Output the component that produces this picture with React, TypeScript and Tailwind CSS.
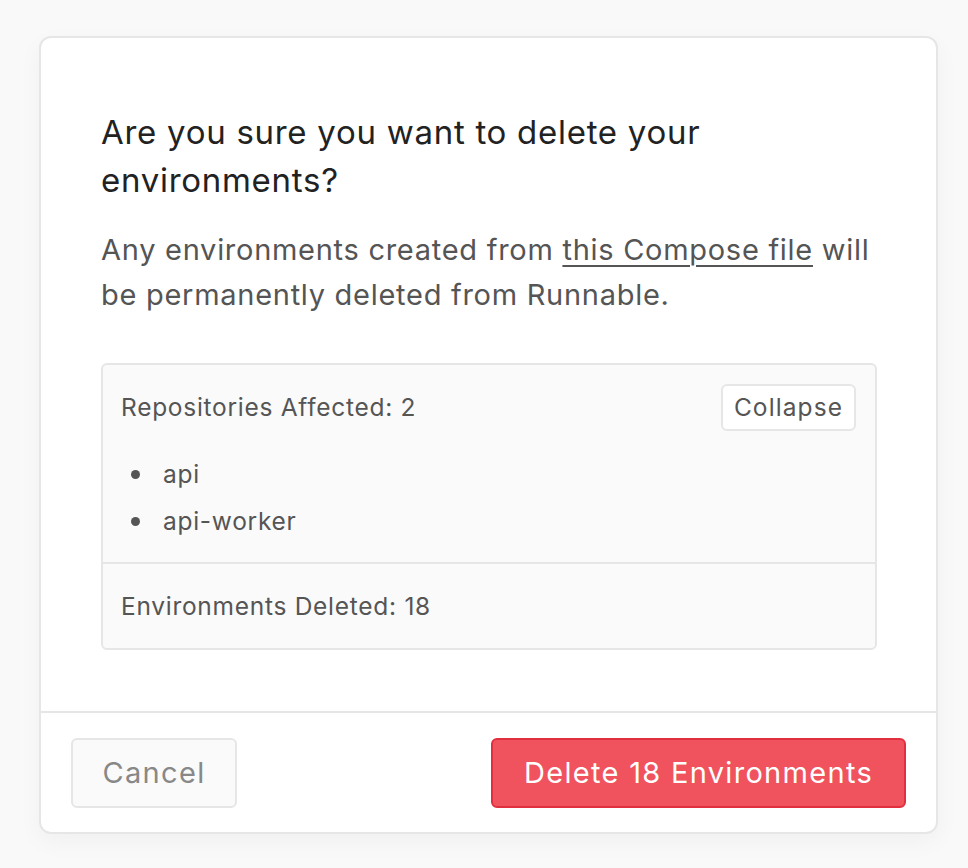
import React from "react";

export default function App() {
  return (
    <div
      className="min-h-[868px] w-[968px] bg-[#f9f9f9] pt-[36px] pl-[39px] tracking-[0.045em]"
      style={{ fontFamily: "Inter, 'Noto Sans', sans-serif" }}
    >
      <div className="w-[899px] h-[798px] bg-white border-2 border-[#e6e6e6] rounded-[12px] shadow-[0_8px_24px_rgba(0,0,0,0.04)] flex flex-col">
        <div className="flex-1 px-[60px] pt-[70px]">
          <h1 className="text-[33px] leading-[48px] text-[#222] font-normal">
            Are you sure you want to delete your
            <br />
            environments?
          </h1>
          <p className="mt-[23px] text-[29px] leading-[45px] text-[#555]">
            Any environments created from{" "}
            <span className="underline decoration-[2px] underline-offset-[5px]">this Compose file</span> will
            <br />
            be permanently deleted from Runnable.
          </p>
          <div className="mt-[46px] w-[776px] bg-[#fafafa] border-2 border-[#e6e6e6] rounded-[6px] text-[24.5px] text-[#555]">
            <div className="pl-[18px] pr-[19px] pt-[19px] pb-[23px]">
              <div className="flex items-center justify-between">
                <span>Repositories Affected: 2</span>
                <button className="h-[47px] w-[135px] bg-white border-2 border-[#e6e6e6] rounded-[6px] text-[24.5px] text-[#555] tracking-[0.045em]">
                  Collapse
                </button>
              </div>
              <ul className="mt-[26px] flex flex-col gap-[12px] pl-[10px]">
                <li className="flex items-center gap-[23px] leading-[35px]">
                  <span className="w-[9px] h-[9px] rounded-full bg-[#555]" />
                  api
                </li>
                <li className="flex items-center gap-[23px] leading-[35px]">
                  <span className="w-[9px] h-[9px] rounded-full bg-[#555]" />
                  api-worker
                </li>
              </ul>
            </div>
            <div className="border-t-2 border-[#e6e6e6] pl-[18px] h-[86px] flex items-center">
              Environments Deleted: 18
            </div>
          </div>
        </div>
        <div className="border-t-2 border-[#e6e6e6] h-[121px] px-[30px] flex items-center justify-between">
          <button className="w-[166px] h-[70px] bg-[#fafafa] border-2 border-[#e6e6e6] rounded-[6px] text-[29px] text-[#888] tracking-[0.045em]">
            Cancel
          </button>
          <button className="w-[415px] h-[70px] bg-[#f0535d] border-2 border-[#e0303f] rounded-[6px] text-[29px] text-white tracking-[0.045em]">
            Delete 18 Environments
          </button>
        </div>
      </div>
    </div>
  );
}
